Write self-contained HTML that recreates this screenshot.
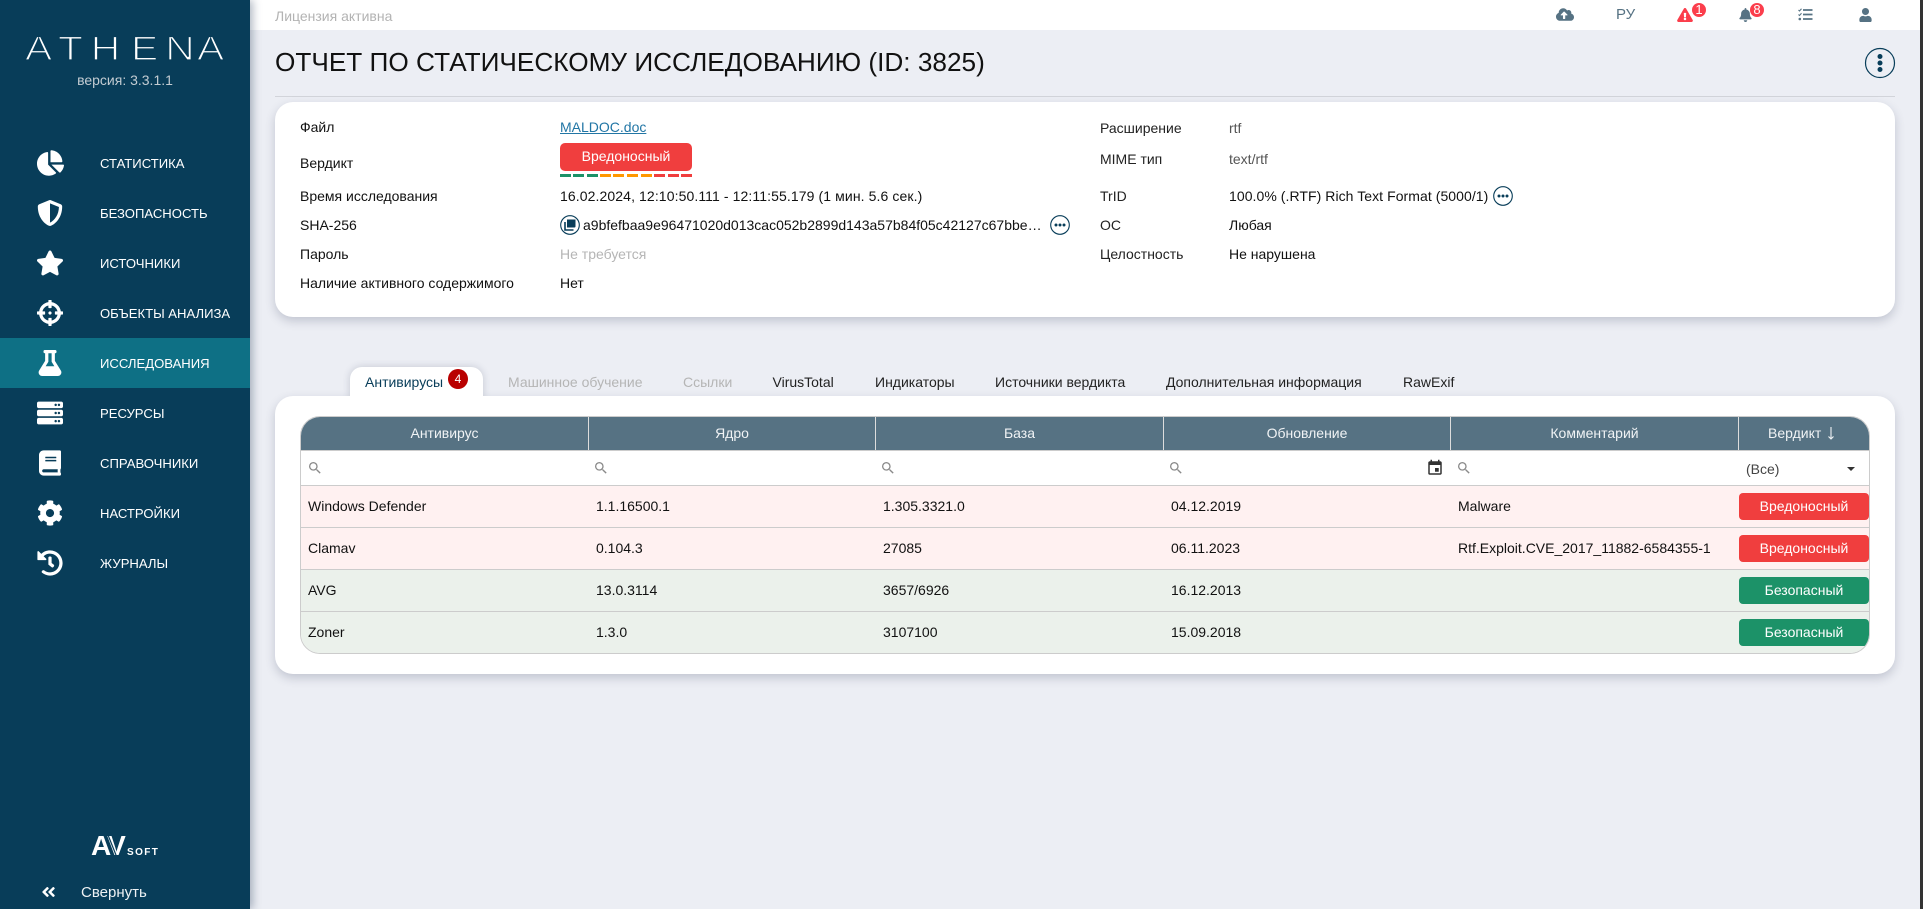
<!DOCTYPE html>
<html lang="ru"><head><meta charset="utf-8"><title>Athena</title>
<style>
*{box-sizing:border-box}
html,body{margin:0;padding:0;width:1923px;height:909px;overflow:hidden;background:#eceef4;font-family:"Liberation Sans","DejaVu Sans",sans-serif;font-size:14px;color:#111}
.a{position:absolute;white-space:nowrap}
#side{position:absolute;left:0;top:0;width:250px;height:909px;background:#083d59;box-shadow:3px 0 8px rgba(40,60,90,.35);z-index:3;color:#fff}
.item{position:absolute;left:0;width:250px;height:50px;line-height:52px;padding-left:100px;font-size:13.100px;color:#fff}
.item svg{position:absolute;fill:#fff}
.item.on{background:#0e7085}
#top{position:absolute;left:250px;top:0;width:1670px;height:30px;background:#fff}
#sb{position:absolute;left:1920px;top:0;width:3px;height:909px;background:#333}
.card{position:absolute;left:275px;width:1620px;background:#fff;border-radius:18px;box-shadow:0 4px 10px rgba(40,50,80,.22)}
.l{position:absolute;height:20px;line-height:20px;white-space:nowrap;color:#111}
.tab{position:absolute;top:372px;height:20px;line-height:20px;white-space:nowrap;color:#222}
.dash{position:absolute;top:174px;height:3px;width:11px}
#tb{position:absolute;left:300px;top:416px;width:1570px;height:238px;border:1px solid #ccc;border-radius:20px;overflow:hidden;background:#fff}
.r{position:absolute;left:0;width:1568px;height:42px;border-top:1px solid #ccc}
.c{position:absolute;top:0;height:41px;line-height:41px;white-space:nowrap}
.hd{position:absolute;top:0;height:33px;line-height:33px;text-align:center;color:#f0f3f5;background:#567283;border-right:1px solid #ddd}
.bd{position:absolute;left:1438px;top:7px;width:130px;height:27px;line-height:27px;border-radius:4px;color:#fff;text-align:center}
.red{background:#f03e3e}.grn{background:#1c9268}
.s{position:absolute;top:43px;width:16px;height:16px;fill:#8a8a8a}
.ic{position:absolute;fill:#567283}
.nb{position:absolute;width:14px;height:14px;border-radius:50%;background:#fb3e4c;color:#fff;font-size:13px;line-height:14px;text-align:center}
</style></head><body>

<div id="side">
<svg class="a" style="left:20px;top:28px" width="210" height="40"><g transform="scale(1.2 1)"><text x="4.2 31.700 59 92.500 121 147.500" y="32" font-size="34" fill="#fff" stroke="#083d59" stroke-width="1.300" font-family="Liberation Sans">ATHENA</text></g></svg>
<div class="a" style="left:0;width:250px;top:71px;text-align:center;font-size:14px;line-height:18px;color:#c3ccd2">версия: 3.3.1.1</div>

<div class="item" style="top:138px">СТАТИСТИКА<svg style="left:37px;top:12px" width="27" height="26" viewBox="0 0 544 512"><path d="M527.79 288H290.5l158.03 158.03c6.04 6.04 15.98 6.53 22.19.68 38.7-36.46 65.32-85.61 73.13-140.86 1.34-9.46-6.51-17.85-16.06-17.85zm-15.83-64.8C503.72 103.74 408.26 8.28 288.8.04 279.68-.59 272 7.1 272 16.24V240h223.77c9.14 0 16.82-7.68 16.19-16.8zM224 288V50.71c0-9.55-8.39-17.4-17.84-16.06C86.99 51.49-4.1 155.6.14 280.37 4.5 408.51 114.83 513.59 243.03 511.98c50.4-.63 96.97-16.87 135.26-44.03 7.9-5.6 8.42-17.23 1.57-24.08L224 288z"/></svg></div>
<div class="item" style="top:188px">БЕЗОПАСНОСТЬ<svg style="left:37px;top:12px" width="26" height="26" viewBox="0 0 512 512"><path d="M466.5 83.7l-192-80a48.15 48.15 0 0 0-36.9 0l-192 80C27.7 91.1 16 108.6 16 128c0 198.5 114.5 335.7 221.5 380.3 11.8 4.9 25.1 4.9 36.9 0C360.1 472.6 496 349.3 496 128c0-19.4-11.7-36.9-29.5-44.3zM256.1 446.3l-.1-381 175.9 73.3c-3.3 151.4-82.1 261.1-175.8 307.7z"/></svg></div>
<div class="item" style="top:238px">ИСТОЧНИКИ<svg style="left:36px;top:12px" width="28" height="26" viewBox="0 0 576 512"><path d="M259.3 17.8L194 150.2 47.9 171.5c-26.2 3.8-36.7 36.1-17.7 54.6l105.7 103-25 145.5c-4.5 26.3 23.2 46 46.4 33.7L288 439.6l130.7 68.7c23.2 12.2 50.9-7.4 46.4-33.7l-25-145.5 105.7-103c19-18.5 8.5-50.8-17.7-54.6L382 150.2 316.7 17.8c-11.7-23.6-45.6-23.9-57.4 0z"/></svg></div>
<div class="item" style="top:288px">ОБЪЕКТЫ АНАЛИЗА<svg style="left:37px;top:12px" width="26" height="26" viewBox="0 0 512 512"><path d="M500 224h-30.364C455.724 130.325 381.675 56.276 288 42.364V12c0-6.627-5.373-12-12-12h-40c-6.627 0-12 5.373-12 12v30.364C130.325 56.276 56.276 130.325 42.364 224H12c-6.627 0-12 5.373-12 12v40c0 6.627 5.373 12 12 12h30.364C56.276 381.675 130.325 455.724 224 469.636V500c0 6.627 5.373 12 12 12h40c6.627 0 12-5.373 12-12v-30.364C381.675 455.724 455.724 381.675 469.636 288H500c6.627 0 12-5.373 12-12v-40c0-6.627-5.373-12-12-12zM288 404.634V364c0-6.627-5.373-12-12-12h-40c-6.627 0-12 5.373-12 12v40.634C165.826 392.232 119.783 346.243 107.366 288H148c6.627 0 12-5.373 12-12v-40c0-6.627-5.373-12-12-12h-40.634C119.768 165.826 165.757 119.783 224 107.366V148c0 6.627 5.373 12 12 12h40c6.627 0 12-5.373 12-12v-40.634C346.174 119.768 392.217 165.757 404.634 224H364c-6.627 0-12 5.373-12 12v40c0 6.627 5.373 12 12 12h40.634C392.232 346.174 346.243 392.217 288 404.634zM288 256c0 17.673-14.327 32-32 32s-32-14.327-32-32c0-17.673 14.327-32 32-32s32 14.327 32 32z"/></svg></div>
<div class="item on" style="top:338px">ИССЛЕДОВАНИЯ<svg style="left:38px;top:12px" width="24" height="26" viewBox="0 0 448 512"><path d="M437.2 403.5L320 215V64h8c13.3 0 24-10.7 24-24V24c0-13.3-10.7-24-24-24H120c-13.3 0-24 10.7-24 24v16c0 13.3 10.7 24 24 24h8v151L10.8 403.5C-18.5 450.6 15.3 512 70.9 512h306.2c55.7 0 89.4-61.5 60.1-108.5zM137.9 320l48.2-77.6c3.7-5.2 5.8-11.6 5.8-18.4V64h64v160c0 6.9 2.2 13.2 5.8 18.4l48.2 77.6h-172z"/></svg></div>
<div class="item" style="top:388px">РЕСУРСЫ<svg style="left:37px;top:12px" width="26" height="26" viewBox="0 0 512 512"><path d="M480 160H32c-17.673 0-32-14.327-32-32V64c0-17.673 14.327-32 32-32h448c17.673 0 32 14.327 32 32v64c0 17.673-14.327 32-32 32zm-48-88c-13.255 0-24 10.745-24 24s10.745 24 24 24 24-10.745 24-24-10.745-24-24-24zm-64 0c-13.255 0-24 10.745-24 24s10.745 24 24 24 24-10.745 24-24-10.745-24-24-24zm112 248H32c-17.673 0-32-14.327-32-32v-64c0-17.673 14.327-32 32-32h448c17.673 0 32 14.327 32 32v64c0 17.673-14.327 32-32 32zm-48-88c-13.255 0-24 10.745-24 24s10.745 24 24 24 24-10.745 24-24-10.745-24-24-24zm-64 0c-13.255 0-24 10.745-24 24s10.745 24 24 24 24-10.745 24-24-10.745-24-24-24zm112 248H32c-17.673 0-32-14.327-32-32v-64c0-17.673 14.327-32 32-32h448c17.673 0 32 14.327 32 32v64c0 17.673-14.327 32-32 32zm-48-88c-13.255 0-24 10.745-24 24s10.745 24 24 24 24-10.745 24-24-10.745-24-24-24zm-64 0c-13.255 0-24 10.745-24 24s10.745 24 24 24 24-10.745 24-24-10.745-24-24-24z"/></svg></div>
<div class="item" style="top:438px">СПРАВОЧНИКИ<svg style="left:39px;top:12px" width="22" height="26" viewBox="0 0 448 512"><path d="M448 360V24c0-13.3-10.7-24-24-24H96C43 0 0 43 0 96v320c0 53 43 96 96 96h328c13.3 0 24-10.7 24-24v-16c0-7.5-3.5-14.3-8.9-18.7-4.2-15.4-4.2-59.3 0-74.7 5.4-4.3 8.9-11.1 8.9-18.6zM128 134c0-3.3 2.7-6 6-6h212c3.3 0 6 2.7 6 6v20c0 3.3-2.7 6-6 6H134c-3.3 0-6-2.7-6-6v-20zm0 64c0-3.3 2.7-6 6-6h212c3.3 0 6 2.7 6 6v20c0 3.3-2.7 6-6 6H134c-3.3 0-6-2.7-6-6v-20zm253.4 250H96c-17.7 0-32-14.3-32-32 0-17.6 14.4-32 32-32h285.4c-1.9 17.1-1.9 46.9 0 64z"/></svg></div>
<div class="item" style="top:488px">НАСТРОЙКИ<svg style="left:37px;top:12px" width="26" height="26" viewBox="0 0 512 512"><path d="M487.4 315.7l-42.6-24.6c4.3-23.2 4.3-47 0-70.2l42.6-24.6c4.9-2.8 7.1-8.6 5.5-14-11.1-35.6-30-67.8-54.7-94.6-3.8-4.1-10-5.1-14.8-2.3L380.8 110c-17.9-15.4-38.5-27.3-60.8-35.1V25.8c0-5.6-3.9-10.5-9.4-11.7-36.7-8.2-74.3-7.8-109.2 0-5.5 1.2-9.4 6.1-9.4 11.7V75c-22.2 7.9-42.8 19.8-60.8 35.1L88.7 85.5c-4.9-2.8-11-1.9-14.8 2.3-24.7 26.7-43.6 58.9-54.7 94.6-1.7 5.4.6 11.2 5.5 14L67.3 221c-4.3 23.2-4.3 47 0 70.2l-42.6 24.6c-4.9 2.8-7.1 8.6-5.5 14 11.1 35.6 30 67.8 54.7 94.6 3.8 4.1 10 5.1 14.8 2.3l42.6-24.6c17.9 15.4 38.5 27.3 60.8 35.1v49.2c0 5.6 3.9 10.5 9.4 11.7 36.7 8.2 74.3 7.8 109.2 0 5.5-1.2 9.4-6.1 9.4-11.7v-49.2c22.2-7.9 42.8-19.8 60.8-35.1l42.6 24.6c4.9 2.8 11 1.9 14.8-2.3 24.7-26.7 43.6-58.9 54.7-94.6 1.5-5.5-.7-11.3-5.6-14.1zM256 336c-44.1 0-80-35.9-80-80s35.9-80 80-80 80 35.9 80 80-35.9 80-80 80z"/></svg></div>
<div class="item" style="top:538px">ЖУРНАЛЫ<svg style="left:37px;top:12px" width="26" height="26" viewBox="0 0 512 512"><path d="M504 255.531c.253 136.64-111.18 248.372-247.82 248.468-59.015.042-113.223-20.53-155.822-54.911-11.077-8.94-11.905-25.541-1.839-35.607l11.267-11.267c8.609-8.609 22.353-9.551 31.891-1.984C173.062 425.135 212.781 440 256 440c101.705 0 184-82.311 184-184 0-101.705-82.311-184-184-184-48.814 0-93.149 18.969-126.068 49.932l50.754 50.754c10.08 10.08 2.941 27.314-11.313 27.314H24c-8.837 0-16-7.163-16-16V38.627c0-14.254 17.234-21.393 27.314-11.314l49.372 49.372C129.209 34.136 189.552 8 256 8c136.81 0 247.747 110.78 248 247.531zm-180.912 78.784l9.823-12.63c8.138-10.463 6.253-25.542-4.21-33.679L288 256.349V152c0-13.255-10.745-24-24-24h-16c-13.255 0-24 10.745-24 24v135.651l65.409 50.874c10.463 8.137 25.541 6.253 33.679-4.21z"/></svg></div>

<svg class="a" style="left:88px;top:830px" width="75" height="30"><text x="3" y="25" font-size="28" font-weight="bold" fill="#fff" letter-spacing="-2" font-family="Liberation Sans">AV</text><path d="M20 5l8 20" stroke="#083d59" stroke-width="1.200"/><text x="39" y="25" font-size="10" font-weight="bold" fill="#fff" letter-spacing="1.400" font-family="Liberation Sans">SOFT</text></svg>
<svg class="a" style="left:40px;top:884px" width="17" height="16" viewBox="0 0 448 512" fill="#fff"><path d="M223.7 239l136-136c9.4-9.4 24.6-9.4 33.9 0l22.6 22.6c9.4 9.4 9.4 24.6 0 33.9L319.9 256l96.4 96.4c9.4 9.4 9.4 24.6 0 33.9L393.7 409c-9.4 9.4-24.6 9.4-33.9 0l-136-136c-9.5-9.4-9.5-24.6-.1-34zm-192 34l136 136c9.4 9.4 24.6 9.4 33.9 0l22.6-22.6c9.4-9.4 9.4-24.6 0-33.9L127.9 256l96.4-96.4c9.4-9.4 9.4-24.6 0-33.9L201.7 103c-9.4-9.4-24.6-9.4-33.9 0l-136 136c-9.5 9.4-9.5 24.6-.1 34z"/></svg>
<div class="a" style="left:81px;top:883px;line-height:20px;font-size:15px;color:#eef2f4">Свернуть</div>
</div>

<div id="top"></div>
<div id="sb"></div>
<div class="a" style="left:275px;top:6px;line-height:20px;color:#b3b3b3;font-size:14px">Лицензия активна</div>
<svg class="ic" style="left:1556px;top:7px" width="18" height="15" viewBox="0 0 640 512"><path d="M537.6 226.6c4.1-10.7 6.4-22.4 6.4-34.6 0-53-43-96-96-96-19.7 0-38.1 6-53.3 16.2C367 64.2 315.3 32 256 32c-88.4 0-160 71.6-160 160 0 2.7.1 5.4.2 8.1C40.2 219.8 0 273.2 0 336c0 79.5 64.5 144 144 144h368c70.7 0 128-57.3 128-128 0-61.9-44-113.6-102.4-125.4zM393.4 288H328v112c0 8.8-7.2 16-16 16h-48c-8.8 0-16-7.2-16-16V288h-65.4c-14.3 0-21.4-17.2-11.3-27.3l105.4-105.4c6.2-6.2 16.4-6.2 22.6 0l105.4 105.4c10.1 10.1 2.9 27.3-11.3 27.3z"/></svg>
<div class="a" style="left:1616px;top:5px;line-height:20px;font-size:15px;color:#567283">РУ</div>
<svg class="ic" style="left:1677px;top:8px;fill:#fb3e4c" width="16" height="14" viewBox="0 0 576 512"><path d="M569.517 440.013C587.975 472.007 564.806 512 527.94 512H48.054c-36.937 0-59.999-40.055-41.577-71.987L246.423 24.035c18.467-32.009 64.72-31.951 83.154 0l239.94 416.978zM288 354c-25.405 0-46 20.595-46 46s20.595 46 46 46 46-20.595 46-46-20.595-46-46-46zm-43.673-165.346l7.418 136c.347 6.364 5.609 11.346 11.982 11.346h48.546c6.373 0 11.635-4.982 11.982-11.346l7.418-136c.375-6.874-5.098-12.654-11.982-12.654h-63.383c-6.884 0-12.356 5.78-11.981 12.654z"/></svg>
<div class="nb" style="left:1692px;top:3px">1</div>
<svg class="ic" style="left:1739px;top:8px" width="13" height="14" viewBox="0 0 448 512"><path d="M224 512c35.32 0 63.97-28.65 63.97-64H160.03c0 35.35 28.65 64 63.97 64zm215.39-149.71c-19.32-20.76-55.47-51.99-55.47-154.29 0-77.7-54.48-139.9-127.94-155.16V32c0-17.67-14.32-32-31.98-32s-31.98 14.33-31.98 32v20.84C118.56 68.1 64.08 130.3 64.08 208c0 102.3-36.15 133.53-55.47 154.29-6 6.45-8.66 14.16-8.61 21.71.11 16.4 12.98 32 32.1 32h383.8c19.12 0 32-15.6 32.1-32 .05-7.55-2.61-15.27-8.61-21.71z"/></svg>
<div class="nb" style="left:1750px;top:3px">8</div>
<svg class="a" style="left:1798px;top:8px" width="15" height="13" viewBox="0 0 15 13" fill="none" stroke="#567283"><path d="M5 2h9.500M5 6.500h9.500M5 11h9.500" stroke-width="1.800"/><path d="M.5 2l1 1L3.500.8M.5 6.500l1 1 2-2.200" stroke-width="1.100"/><circle cx="1.800" cy="11" r="1.300" fill="#567283" stroke="none"/></svg>
<svg class="ic" style="left:1859px;top:8px" width="13" height="14" viewBox="0 0 448 512"><path d="M224 256c70.7 0 128-57.3 128-128S294.7 0 224 0 96 57.3 96 128s57.3 128 128 128zm89.6 32h-16.7c-22.2 10.200-46.900 16-72.900 16s-50.600-5.800-72.900-16h-16.700C60.200 288 0 348.200 0 422.400V464c0 26.500 21.500 48 48 48h352c26.500 0 48-21.500 48-48v-41.600c0-74.200-60.200-134.400-134.400-134.400z"/></svg>

<div class="a" style="left:275px;top:45px;line-height:34px;font-size:26.200px;color:#111">ОТЧЕТ ПО СТАТИЧЕСКОМУ ИССЛЕДОВАНИЮ (ID: 3825)</div>
<svg class="a" style="left:1864px;top:47px" width="32" height="32"><circle cx="16" cy="16" r="14.500" fill="none" stroke="#083d59" stroke-width="1.200"/><circle cx="16" cy="9.500" r="2.500" fill="#083d59"/><circle cx="16" cy="16" r="2.500" fill="#083d59"/><circle cx="16" cy="22.500" r="2.500" fill="#083d59"/></svg>
<div class="a" style="left:275px;top:96px;width:1620px;height:1px;background:#d2d4da"></div>

<div class="card" style="top:102px;height:215px"></div>
<div class="l" style="left:300px;top:117px">Файл</div>
<div class="l" style="left:300px;top:153px">Вердикт</div>
<div class="l" style="left:300px;top:186px">Время исследования</div>
<div class="l" style="left:300px;top:215px">SHA-256</div>
<div class="l" style="left:300px;top:244px">Пароль</div>
<div class="l" style="left:300px;top:273px">Наличие активного содержимого</div>
<div class="l" style="left:560px;top:117px;color:#2276a5;text-decoration:underline">MALDOC.doc</div>
<div class="a" style="left:560px;top:143px;width:132px;height:28px;line-height:27px;background:#f03e3e;border-radius:5px;color:#fff;text-align:center">Вредоносный</div>
<div class="dash" style="left:560px;background:#1c9268"></div><div class="dash" style="left:573px;background:#1c9268"></div><div class="dash" style="left:587px;background:#1c9268"></div><div class="dash" style="left:600px;background:#ff9800"></div><div class="dash" style="left:613px;background:#ff9800"></div><div class="dash" style="left:627px;background:#ff9800"></div><div class="dash" style="left:641px;background:#ff9800"></div><div class="dash" style="left:654px;background:#f03e3e"></div><div class="dash" style="left:668px;background:#f03e3e"></div><div class="dash" style="left:681px;background:#f03e3e"></div>
<div class="l" style="left:560px;top:186px;letter-spacing:.1px">16.02.2024, 12:10:50.111 - 12:11:55.179 (1 мин. 5.6 сек.)</div>
<svg class="a" style="left:560px;top:215px" width="20" height="20"><circle cx="10" cy="10" r="9.300" fill="#fff" stroke="#083d59" stroke-width="1.100"/><path d="M7 4.500h8.500v7a1 1 0 0 1-1 1H7z" fill="#083d59"/><path d="M5 7v8h8.500" fill="none" stroke="#083d59" stroke-width="1.600"/></svg>
<div class="l" style="left:583px;top:215px;width:462px;overflow:hidden;text-overflow:ellipsis">a9bfefbaa9e96471020d013cac052b2899d143a57b84f05c42127c67bbe4b1a7c</div>
<svg class="a" style="left:1050px;top:215px" width="20" height="20"><circle cx="10" cy="10" r="9.300" fill="#fff" stroke="#083d59" stroke-width="1.100"/><circle cx="6" cy="10" r="1.500" fill="#083d59"/><circle cx="10" cy="10" r="1.500" fill="#083d59"/><circle cx="14" cy="10" r="1.500" fill="#083d59"/></svg>
<div class="l" style="left:560px;top:244px;color:#b5b5b5">Не требуется</div>
<div class="l" style="left:560px;top:273px">Нет</div>

<div class="l" style="left:1100px;top:118px;color:#222">Расширение</div>
<div class="l" style="left:1100px;top:149px;color:#222">MIME тип</div>
<div class="l" style="left:1100px;top:186px;color:#222">TrID</div>
<div class="l" style="left:1100px;top:215px;color:#222">ОС</div>
<div class="l" style="left:1100px;top:244px;color:#222">Целостность</div>
<div class="l" style="left:1229px;top:118px;color:#555">rtf</div>
<div class="l" style="left:1229px;top:149px;color:#555">text/rtf</div>
<div class="l" style="left:1229px;top:186px;letter-spacing:.06px">100.0% (.RTF) Rich Text Format (5000/1)</div>
<svg class="a" style="left:1493px;top:186px" width="20" height="20"><circle cx="10" cy="10" r="9.300" fill="#fff" stroke="#083d59" stroke-width="1.100"/><circle cx="6" cy="10" r="1.500" fill="#083d59"/><circle cx="10" cy="10" r="1.500" fill="#083d59"/><circle cx="14" cy="10" r="1.500" fill="#083d59"/></svg>
<div class="l" style="left:1229px;top:215px">Любая</div>
<div class="l" style="left:1229px;top:244px">Не нарушена</div>

<div class="a" style="left:350px;top:367px;width:133px;height:32px;background:#fff;border-radius:12px 12px 0 0;box-shadow:0 0 8px rgba(40,50,80,.2)"></div>
<div class="card" style="top:396px;height:278px"></div>
<div class="a" style="left:350px;top:390px;width:133px;height:10px;background:#fff"></div>
<div class="tab" style="left:365px;color:#083d59">Антивирусы</div>
<div class="a" style="left:448px;top:369px;width:20px;height:20px;border-radius:50%;background:#b90000;color:#fff;text-align:center;line-height:20px;font-size:12px">4</div>
<div class="tab" style="left:508px;color:#b5b5b5">Машинное обучение</div>
<div class="tab" style="left:683px;color:#b5b5b5">Ссылки</div>
<div class="tab" style="left:772.500px">VirusTotal</div>
<div class="tab" style="left:875px">Индикаторы</div>
<div class="tab" style="left:995px">Источники вердикта</div>
<div class="tab" style="left:1166px">Дополнительная информация</div>
<div class="tab" style="left:1403px">RawExif</div>

<div id="tb">
<div class="hd" style="left:0;width:288px">Антивирус</div>
<div class="hd" style="left:288px;width:287px">Ядро</div>
<div class="hd" style="left:575px;width:288px">База</div>
<div class="hd" style="left:863px;width:287px">Обновление</div>
<div class="hd" style="left:1150px;width:288px">Комментарий</div>
<div class="hd" style="left:1438px;width:130px;border-right:0;text-align:left;padding-left:29px">Вердикт</div>
<svg class="a" style="left:1526px;top:9px" width="8" height="15" fill="none" stroke="#f0f3f5" stroke-width="1.100"><path d="M4 1v12M1.500 10.500L4 13l2.500-2.500"/></svg>
<div class="a" style="left:0;top:33px;width:1568px;height:1px;background:#ccc"></div>
<svg class="s" style="left:6px" viewBox="0 0 24 24"><path d="M15.500 14h-.79l-.28-.27A6.471 6.471 0 0 0 16 9.500 6.500 6.500 0 1 0 9.500 16c1.610 0 3.090-.59 4.230-1.570l.27.28v.79l5 4.990L20.490 19l-4.990-5zm-6 0C7.010 14 5 11.990 5 9.500S7.010 5 9.500 5 14 7.010 14 9.500 11.990 14 9.500 14z"/></svg>
<svg class="s" style="left:292px" viewBox="0 0 24 24"><path d="M15.500 14h-.79l-.28-.27A6.471 6.471 0 0 0 16 9.500 6.500 6.500 0 1 0 9.500 16c1.610 0 3.090-.59 4.230-1.570l.27.28v.79l5 4.990L20.490 19l-4.990-5zm-6 0C7.010 14 5 11.990 5 9.500S7.010 5 9.500 5 14 7.010 14 9.500 11.990 14 9.500 14z"/></svg>
<svg class="s" style="left:579px" viewBox="0 0 24 24"><path d="M15.500 14h-.79l-.28-.27A6.471 6.471 0 0 0 16 9.500 6.500 6.500 0 1 0 9.500 16c1.610 0 3.090-.59 4.230-1.570l.27.28v.79l5 4.990L20.490 19l-4.990-5zm-6 0C7.010 14 5 11.990 5 9.500S7.010 5 9.500 5 14 7.010 14 9.500 11.990 14 9.500 14z"/></svg>
<svg class="s" style="left:867px" viewBox="0 0 24 24"><path d="M15.500 14h-.79l-.28-.27A6.471 6.471 0 0 0 16 9.500 6.500 6.500 0 1 0 9.500 16c1.610 0 3.090-.59 4.230-1.570l.27.28v.79l5 4.990L20.490 19l-4.990-5zm-6 0C7.010 14 5 11.990 5 9.500S7.010 5 9.500 5 14 7.010 14 9.500 11.990 14 9.500 14z"/></svg>
<svg class="s" style="left:1155px" viewBox="0 0 24 24"><path d="M15.500 14h-.79l-.28-.27A6.471 6.471 0 0 0 16 9.500 6.500 6.500 0 1 0 9.500 16c1.610 0 3.090-.59 4.230-1.570l.27.28v.79l5 4.990L20.490 19l-4.990-5zm-6 0C7.010 14 5 11.990 5 9.500S7.010 5 9.500 5 14 7.010 14 9.500 11.990 14 9.500 14z"/></svg>
<svg class="a" style="left:1125px;top:42px;fill:#333" width="18" height="18" viewBox="0 0 24 24"><path d="M17 12h-5v5h5v-5zM16 1v2H8V1H6v2H5c-1.110 0-1.990.9-1.990 2L3 19a2 2 0 0 0 2 2h14c1.100 0 2-.9 2-2V5c0-1.100-.9-2-2-2h-1V1h-2zm3 18H5V8h14v11z"/></svg>
<div class="a" style="left:1445px;top:42px;line-height:20px;color:#444">(Все)</div>
<div class="a" style="left:1546px;top:50px;width:0;height:0;border-left:4px solid transparent;border-right:4px solid transparent;border-top:4px solid #333"></div>

<div class="r" style="top:68px;background:#fff1f1">
<div class="c" style="left:7px">Windows Defender</div><div class="c" style="left:295px">1.1.16500.1</div><div class="c" style="left:582px">1.305.3321.0</div><div class="c" style="left:870px">04.12.2019</div><div class="c" style="left:1157px">Malware</div><div class="bd red">Вредоносный</div></div>
<div class="r" style="top:110px;background:#fff1f1">
<div class="c" style="left:7px">Clamav</div><div class="c" style="left:295px">0.104.3</div><div class="c" style="left:582px">27085</div><div class="c" style="left:870px">06.11.2023</div><div class="c" style="left:1157px">Rtf.Exploit.CVE_2017_11882-6584355-1</div><div class="bd red">Вредоносный</div></div>
<div class="r" style="top:152px;background:#ebf1eb">
<div class="c" style="left:7px">AVG</div><div class="c" style="left:295px">13.0.3114</div><div class="c" style="left:582px">3657/6926</div><div class="c" style="left:870px">16.12.2013</div><div class="bd grn">Безопасный</div></div>
<div class="r" style="top:194px;background:#ebf1eb">
<div class="c" style="left:7px">Zoner</div><div class="c" style="left:295px">1.3.0</div><div class="c" style="left:582px">3107100</div><div class="c" style="left:870px">15.09.2018</div><div class="bd grn">Безопасный</div></div>
</div>
</body></html>
